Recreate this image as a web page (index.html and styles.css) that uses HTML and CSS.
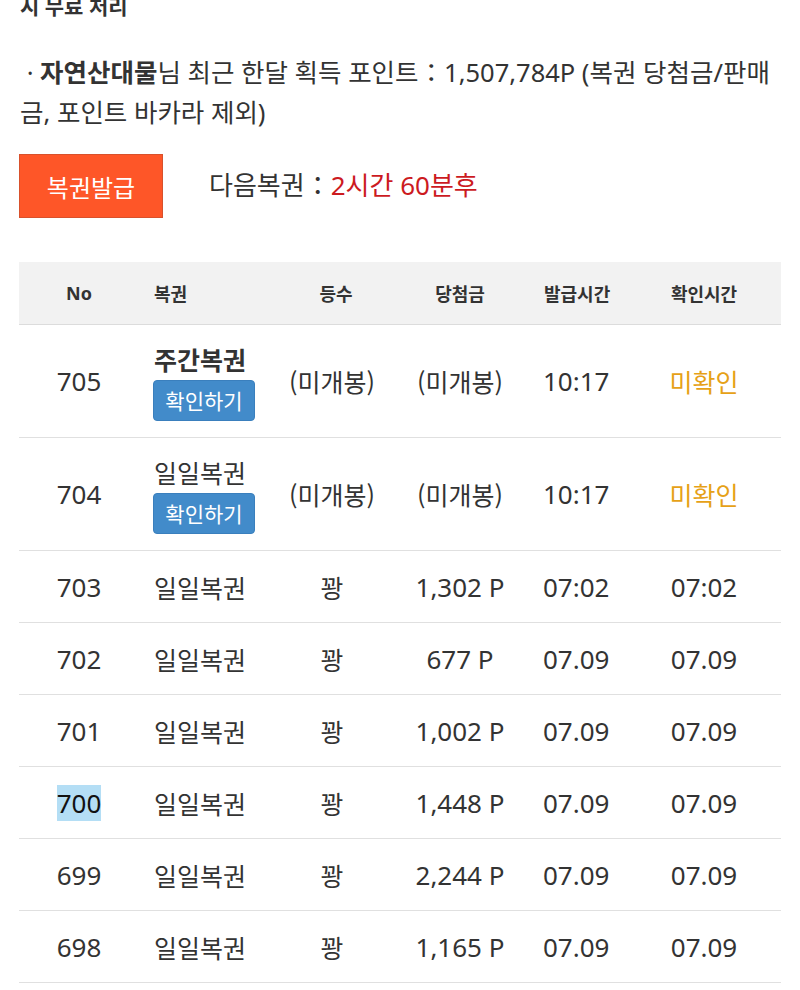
FILE: index.html
```html
<!DOCTYPE html>
<html lang="ko">
<head>
<meta charset="utf-8">
<title>복권</title>
<link rel="stylesheet" href="styles.css">
</head>
<body>
<div class="page">
  <div class="cut">시 무료 처리</div>
  <p class="info">&nbsp;· <b>자연산대물</b>님 최근 한달 획득 포인트：1,507,784P (복권 당첨금/판매금, 포인트 바카라 제외)</p>
  <div class="issue">
    <button class="issue-btn">복권발급</button>
    <div class="next">다음복권：<span class="red">2시간 60분후</span></div>
  </div>

  <div class="table">
    <div class="row head">
      <div class="c c-no">No</div>
      <div class="c c-name">복권</div>
      <div class="c c-rank">등수</div>
      <div class="c c-prize">당첨금</div>
      <div class="c c-issue">발급시간</div>
      <div class="c c-check">확인시간</div>
    </div>

    <div class="row tall">
      <div class="c c-no num">705</div>
      <div class="c c-name stack"><span class="strong">주간복권</span><button class="check-btn">확인하기</button></div>
      <div class="c c-rank">(미개봉)</div>
      <div class="c c-prize">(미개봉)</div>
      <div class="c c-issue num">10:17</div>
      <div class="c c-check warn">미확인</div>
    </div>
    <div class="row tall">
      <div class="c c-no num">704</div>
      <div class="c c-name stack"><span>일일복권</span><button class="check-btn">확인하기</button></div>
      <div class="c c-rank">(미개봉)</div>
      <div class="c c-prize">(미개봉)</div>
      <div class="c c-issue num">10:17</div>
      <div class="c c-check warn">미확인</div>
    </div>
    <div class="row">
      <div class="c c-no num">703</div>
      <div class="c c-name">일일복권</div>
      <div class="c c-rank">꽝</div>
      <div class="c c-prize num">1,302 P</div>
      <div class="c c-issue num">07:02</div>
      <div class="c c-check num">07:02</div>
    </div>
    <div class="row">
      <div class="c c-no num">702</div>
      <div class="c c-name">일일복권</div>
      <div class="c c-rank">꽝</div>
      <div class="c c-prize num">677 P</div>
      <div class="c c-issue num">07.09</div>
      <div class="c c-check num">07.09</div>
    </div>
    <div class="row">
      <div class="c c-no num">701</div>
      <div class="c c-name">일일복권</div>
      <div class="c c-rank">꽝</div>
      <div class="c c-prize num">1,002 P</div>
      <div class="c c-issue num">07.09</div>
      <div class="c c-check num">07.09</div>
    </div>
    <div class="row">
      <div class="c c-no num"><span class="sel">700</span></div>
      <div class="c c-name">일일복권</div>
      <div class="c c-rank">꽝</div>
      <div class="c c-prize num">1,448 P</div>
      <div class="c c-issue num">07.09</div>
      <div class="c c-check num">07.09</div>
    </div>
    <div class="row">
      <div class="c c-no num">699</div>
      <div class="c c-name">일일복권</div>
      <div class="c c-rank">꽝</div>
      <div class="c c-prize num">2,244 P</div>
      <div class="c c-issue num">07.09</div>
      <div class="c c-check num">07.09</div>
    </div>
    <div class="row">
      <div class="c c-no num">698</div>
      <div class="c c-name">일일복권</div>
      <div class="c c-rank">꽝</div>
      <div class="c c-prize num">1,165 P</div>
      <div class="c c-issue num">07.09</div>
      <div class="c c-check num">07.09</div>
    </div>
  </div>
</div>
</body>
</html>
```

FILE: styles.css
```css
* { box-sizing: border-box; }
html, body { margin: 0; padding: 0; background: #fff; }
body {
  font-family: "Noto Sans", "Noto Sans CJK KR", sans-serif;
  color: #333;
  overflow: hidden;
}
.page { padding: 0 19px; }

.cut {
  font-size: 21px;
  font-weight: 700;
  line-height: 28px;
  margin-top: -8px;
  padding-left: 1px;
}

.info {
  margin: 32px 0 0;
  padding-left: 1px;
  font-size: 25.5px;
  line-height: 40px;
  color: #333;
}
.info b { font-weight: 700; }

.issue {
  display: flex;
  align-items: center;
  gap: 46px;
  margin-top: 22px;
}
.issue-btn {
  width: 144px;
  height: 64px;
  background: #fe5628;
  border: 1px solid #d8512c;
  color: #fff;
  font-family: "Noto Sans CJK KR", sans-serif;
  font-size: 24px;
  padding: 0;
}
.next {
  font-family: "Noto Sans", "Noto Sans CJK KR", sans-serif;
  font-size: 26px;
  color: #333;
  margin-top: -4px;
}
.red { color: #cc1a1f; }

.table { margin-top: 44px; width: 762px; }
.row {
  display: grid;
  grid-template-columns: 120px 145px 96px 160px 100px 128px;
  height: 72px;
  border-bottom: 1px solid #e0e0e0;
  align-items: center;
  font-family: "Noto Sans CJK KR", sans-serif;
  font-size: 25px;
}
.row.tall { height: 113px; }
.row.head {
  height: 63px;
  background: #f2f2f2;
  border-bottom: 1px solid #dcdcdc;
  font-size: 18px;
  font-weight: 700;
  color: #333;
}
.c { text-align: center; white-space: nowrap; }
.c-name { text-align: left; padding-left: 15px; }
.c-issue { text-align: left; padding-left: 3px; }
.head .c-issue { padding-left: 4px; }
.head .c-rank { padding-left: 8px; }
.num { font-family: "Noto Sans", sans-serif; font-size: 26px; }
.head .c-no { font-family: "Noto Sans", sans-serif; font-size: 18px; }

.stack {
  display: flex;
  flex-direction: column;
  align-items: flex-start;
  gap: 6px;
  line-height: 30px;
  margin-top: 2px;
}
.strong { font-weight: 700; }
.check-btn {
  width: 102px;
  height: 41px;
  margin-left: -1px;
  background: #428bca;
  border: 1px solid #3a7fbd;
  border-radius: 4px;
  color: #fff;
  font-family: "Noto Sans CJK KR", sans-serif;
  font-size: 21px;
  padding: 0;
}
.warn { color: #e6a117; }
.sel { background: #b4def5; color: #111; }
```
